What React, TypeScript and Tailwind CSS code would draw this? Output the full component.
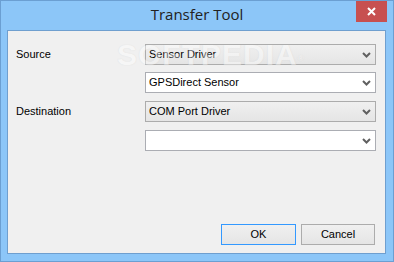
import React from "react";

function Chevron() {
  return (
    <svg width="9" height="6" viewBox="0 0 9 6" className="shrink-0">
      <path d="M1 1 L4.5 4.5 L8 1" fill="none" stroke="#606060" strokeWidth="2" />
    </svg>
  );
}

function Combo({ value, editable }: { value: string; editable?: boolean }) {
  return (
    <div
      className={
        editable
          ? "flex h-[21px] w-[231px] items-center justify-between border border-[#abadb3] bg-white pl-[3px] pr-[4px]"
          : "flex h-[21px] w-[231px] items-center justify-between border border-[#acacac] bg-gradient-to-b from-[#f0f0f0] to-[#e5e5e5] pl-[3px] pr-[4px]"
      }
    >
      <span className="text-[11px] leading-none text-black">{value}</span>
      <Chevron />
    </div>
  );
}

function Button({ label, focused }: { label: string; focused?: boolean }) {
  return (
    <div
      className={
        focused
          ? "flex h-[21px] w-[75px] items-center justify-center border border-[#3399ff] bg-gradient-to-b from-[#f0f0f0] to-[#e5e5e5] text-[11px] text-black"
          : "flex h-[21px] w-[74px] items-center justify-center border border-[#acacac] bg-gradient-to-b from-[#f0f0f0] to-[#e5e5e5] text-[11px] text-black"
      }
    >
      {label}
    </div>
  );
}

export default function App() {
  return (
    <div
      className="relative flex h-[262px] w-[394px] flex-col border border-[#6b9fd2] bg-[#8cc6f8]"
      style={{ fontFamily: '"Liberation Sans", Arial, sans-serif' }}
    >
      {/* title bar */}
      <div className="relative flex h-[29px] items-center justify-center">
        <span
          className="pb-[2px] text-[15px] text-[#222]"
          style={{ fontFamily: '"Open Sans", "Noto Sans", sans-serif' }}
        >
          Transfer Tool
        </span>
        <div className="absolute right-[6px] top-0 flex h-[21px] w-[31px] items-center justify-center bg-[#c75050]">
          <svg width="9" height="9" viewBox="0 0 9 9">
            <path d="M1 1 L8 8 M8 1 L1 8" stroke="white" strokeWidth="2" />
          </svg>
        </div>
      </div>

      {/* client area */}
      <div className="ml-[6px] mr-[7px] mb-[7px] flex flex-1 flex-col border border-[#6f9fcf] bg-[#f0f0f0] pl-[8px] pr-[9px] pt-[13px] pb-[8px]">
        <div className="flex items-center justify-between">
          <span className="text-[11px] text-black">Source</span>
          <Combo value="Sensor Driver" />
        </div>
        <div className="mt-[7px] flex justify-end">
          <Combo value="GPSDirect Sensor" editable />
        </div>
        <div className="mt-[8px] flex items-center justify-between">
          <span className="text-[11px] text-black">Destination</span>
          <Combo value="COM Port Driver" />
        </div>
        <div className="mt-[8px] flex justify-end">
          <Combo value="" editable />
        </div>
        <div className="mt-auto flex justify-end gap-[5px] pr-px">
          <Button label="OK" focused />
          <Button label="Cancel" />
        </div>
      </div>

      {/* watermark */}
      <div
        className="pointer-events-none absolute left-[116px] top-[31px] text-[30px] font-bold tracking-[1px] text-white opacity-40"
        style={{ fontFamily: '"Liberation Sans", Arial, sans-serif', textShadow: "0 0 1px #bbb" }}
      >
        SOFTPEDIA<sup className="text-[8px]">®</sup>
      </div>
    </div>
  );
}
